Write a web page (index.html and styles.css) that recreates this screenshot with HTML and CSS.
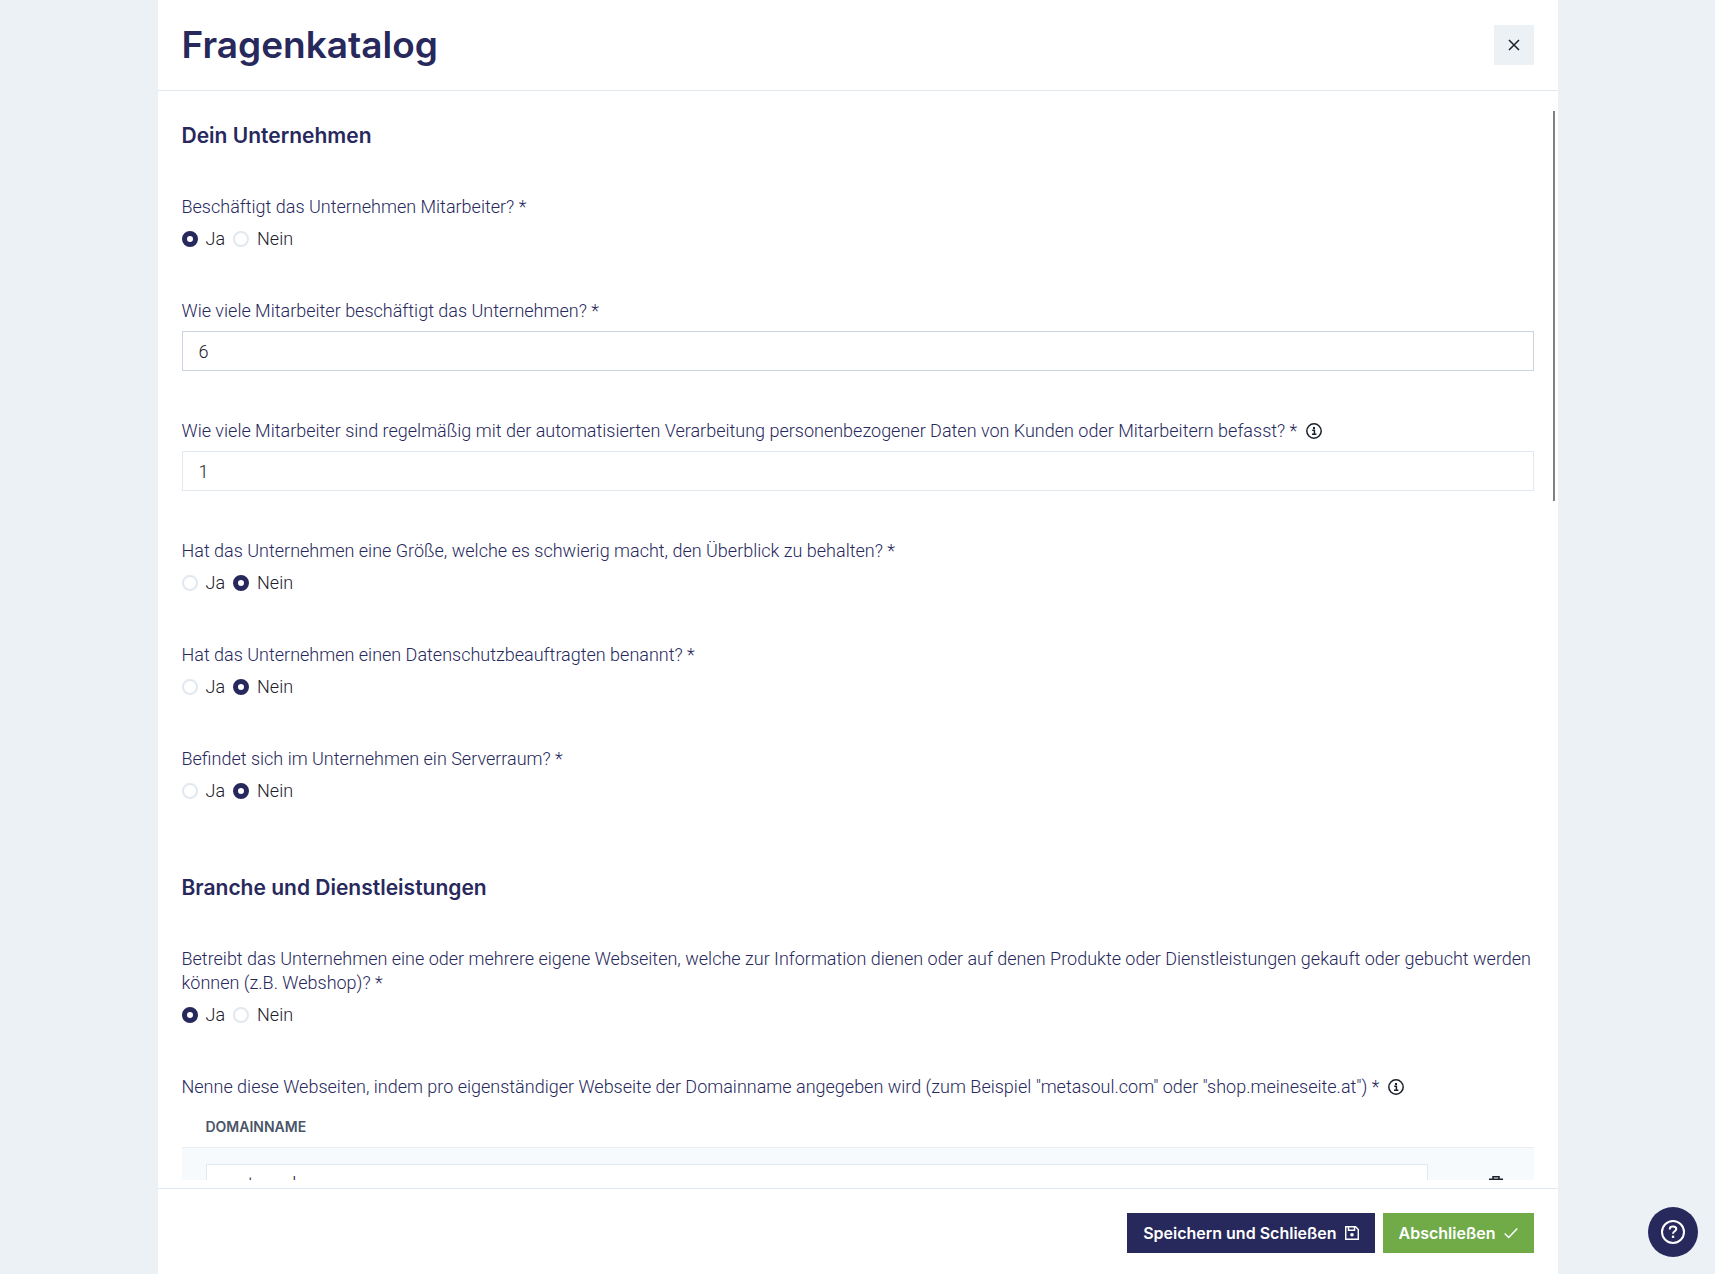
FILE: index.html
```html
<!DOCTYPE html>
<html lang="de">
<head>
	<title>Fragenkatalog</title>
	<meta charset="utf-8">
	<meta name="viewport" content="width=device-width, initial-scale=1">
	<link rel="stylesheet" href="styles.css">
</head>
<body>
	<main class="panel">
		<header class="panel-header">
			<h1>Fragenkatalog</h1>
			<button type="button" class="btn-close" aria-label="Schließen">
				<svg width="12" height="12" viewBox="0 0 12 12"><path d="M1 1l10 10M11 1L1 11"/></svg>
			</button>
		</header>

		<form class="panel-form" id="fragen">
			<section>
				<h2>Dein Unternehmen</h2>

				<fieldset class="question">
					<legend>Beschäftigt das Unternehmen Mitarbeiter? *</legend>
					<div class="options">
						<label><input type="radio" name="mitarbeiter" checked>Ja</label>
						<label><input type="radio" name="mitarbeiter">Nein</label>
					</div>
				</fieldset>

				<div class="question">
					<label class="question-label" for="anzahl">Wie viele Mitarbeiter beschäftigt das Unternehmen? *</label>
					<input class="text-input active" type="text" id="anzahl" value="6">
				</div>

				<div class="question">
					<label class="question-label" for="anzahl-daten">Wie viele Mitarbeiter sind regelmäßig mit der automatisierten Verarbeitung personenbezogener Daten von Kunden oder Mitarbeitern befasst? *
						<svg class="info" width="16" height="16" viewBox="0 0 16 16"><circle cx="8" cy="8" r="7.2"/><path d="M6.2 7.2H8.4V11M6 11.2h4.4"/><path class="dot" d="M7 4h2v2H7z"/></svg>
					</label>
					<input class="text-input" type="text" id="anzahl-daten" value="1">
				</div>

				<fieldset class="question">
					<legend>Hat das Unternehmen eine Größe, welche es schwierig macht, den Überblick zu behalten? *</legend>
					<div class="options">
						<label><input type="radio" name="groesse">Ja</label>
						<label><input type="radio" name="groesse" checked>Nein</label>
					</div>
				</fieldset>

				<fieldset class="question">
					<legend>Hat das Unternehmen einen Datenschutzbeauftragten benannt? *</legend>
					<div class="options">
						<label><input type="radio" name="dsb">Ja</label>
						<label><input type="radio" name="dsb" checked>Nein</label>
					</div>
				</fieldset>

				<fieldset class="question">
					<legend>Befindet sich im Unternehmen ein Serverraum? *</legend>
					<div class="options">
						<label><input type="radio" name="serverraum">Ja</label>
						<label><input type="radio" name="serverraum" checked>Nein</label>
					</div>
				</fieldset>
			</section>

			<section>
				<h2>Branche und Dienstleistungen</h2>

				<fieldset class="question">
					<legend>Betreibt das Unternehmen eine oder mehrere eigene Webseiten, welche zur Information dienen oder auf denen Produkte oder Dienstleistungen gekauft oder gebucht werden können (z.B. Webshop)? *</legend>
					<div class="options">
						<label><input type="radio" name="webseiten" checked>Ja</label>
						<label><input type="radio" name="webseiten">Nein</label>
					</div>
				</fieldset>

				<div class="question">
					<label class="question-label" for="domain">Nenne diese Webseiten, indem pro eigenständiger Webseite der Domainname angegeben wird (zum Beispiel "metasoul.com" oder "shop.meineseite.at") *
						<svg class="info" width="16" height="16" viewBox="0 0 16 16"><circle cx="8" cy="8" r="7.2"/><path d="M6.2 7.2H8.4V11M6 11.2h4.4"/><path class="dot" d="M7 4h2v2H7z"/></svg>
					</label>
					<table class="domains">
						<thead>
							<tr><th>Domainname</th><th class="action"></th></tr>
						</thead>
						<tbody>
							<tr>
								<td><input class="text-input" type="text" id="domain" value="metasoul.com"></td>
								<td class="action">
									<button type="button" class="btn-delete" aria-label="Löschen">
										<svg width="14" height="16" viewBox="0 0 14 16"><path d="M0 3.2h14M4 3V.8h6V3M2 4v11h10V4M5.5 6.5v6M8.5 6.5v6"/></svg>
									</button>
								</td>
							</tr>
						</tbody>
					</table>
				</div>
			</section>
		</form>
		<div class="scroll-thumb"></div>

		<footer class="panel-footer">
			<button type="submit" form="fragen" class="btn btn-primary">Speichern und Schließen
				<svg width="14" height="14" viewBox="0 0 14 14"><path d="M.7.7h9.8l2.8 2.8v9.8H.7z"/><path d="M3.5 1v3.3h6V1"/><circle class="dot" cx="7" cy="8.8" r="1.8"/></svg>
			</button>
			<button type="submit" form="fragen" class="btn btn-success">Abschließen
				<svg width="14" height="14" viewBox="0 0 14 14"><path d="M.7 7.5l4 4L13.3 2.5"/></svg>
			</button>
		</footer>
	</main>

	<button type="button" class="btn-help" aria-label="Hilfe">
		<svg width="24" height="24" viewBox="0 0 24 24"><circle cx="12" cy="12" r="11"/><path d="M8.8 9.6V9c0-1.6 1-2.4 3.2-2.4s3.3 1 3.3 2.5c0 2.3-3.3 2-3.3 4.7"/><path class="dot" d="M10.9 15.6h2.3v2.3h-2.3z"/></svg>
	</button>
</body>
</html>
```
FILE: styles.css
```css
* {
	box-sizing: border-box;
	margin: 0;
	padding: 0;
}

body {
	background: #ecf1f6;
	color: #1a202c;
	font-family: Roboto, "Liberation Sans", sans-serif;
	font-size: 18px;
	font-weight: 300;
	line-height: 24px;
}

button, input {
	font: inherit;
	color: inherit;
}

button {
	border: 0;
	cursor: pointer;
}

svg {
	fill: none;
	stroke: currentColor;
	stroke-width: 1.5;
}

svg .dot {
	fill: currentColor;
	stroke: none;
}

/* panel */
.panel {
	position: relative;
	display: flex;
	flex-direction: column;
	width: calc(100% - 48px);
	max-width: 1400px;
	height: 100vh;
	margin: 0 auto;
	background: #fff;
}

.panel-header {
	display: flex;
	align-items: center;
	justify-content: space-between;
	padding: 20px 24px;
	border-bottom: 1px solid #e2e8f0;
}

h1, h2, th, .btn {
	font-family: Inter, "Liberation Sans", sans-serif;
	font-weight: 600;
}

h1, h2 {
	color: #27285c;
}

h1 {
	font-size: 37px;
	line-height: 50px;
}

h2 {
	margin-bottom: 46px;
	font-size: 21px;
	line-height: 26px;
}

.btn-close {
	display: flex;
	align-items: center;
	justify-content: center;
	width: 40px;
	height: 40px;
	background: #ecf1f6;
}

.panel-form {
	flex: 1;
	min-height: 0;
	margin-bottom: 8px;
	padding: 32px 24px 0;
	overflow-y: auto;
	scrollbar-width: none;
}

.scroll-thumb {
	position: absolute;
	top: 111px;
	right: 3px;
	width: 2px;
	height: 390px;
	background: #808080;
}

section {
	margin-bottom: 72px;
}

/* questions */
.question {
	margin-bottom: 48px;
	border: 0;
}

.question:last-child {
	margin-bottom: 0;
}

.question-label, legend {
	display: block;
	margin-bottom: 8px;
	color: #27285c;
}

.info {
	margin-left: 4px;
	color: #1a202c;
	vertical-align: -2px;
}

.options {
	display: flex;
	gap: 8px;
}

.options label {
	display: flex;
	align-items: center;
	gap: 8px;
}

.options input {
	appearance: none;
	width: 16px;
	height: 16px;
	border: 2px solid #e2e8f0;
	border-radius: 50%;
	background: #fff;
}

.options input:checked {
	border: 5px solid #27285c;
}

.text-input {
	display: block;
	width: 100%;
	height: 40px;
	padding: 0 16px;
	border: 1px solid #e2e8f0;
	background: #fff;
}

.text-input.active {
	border-color: #cbd5e0;
}

/* domain table */
.domains {
	width: 100%;
	border-collapse: collapse;
}

.domains th {
	height: 40px;
	padding: 0 24px;
	color: #4a5568;
	font-size: 14px;
	text-align: left;
	text-transform: uppercase;
}

.domains td {
	padding: 16px 24px;
	border-top: 1px solid #e8eef2;
	background: #f6fafd;
}

.domains .action {
	width: 82px;
	padding: 0 18px 0 24px;
}

.btn-delete {
	display: flex;
	align-items: center;
	justify-content: center;
	width: 40px;
	height: 40px;
	background: none;
}

/* footer */
.panel-footer {
	display: flex;
	justify-content: flex-end;
	gap: 8px;
	padding: 24px 24px 21px;
	border-top: 1px solid #e2e8f0;
}

.btn {
	display: flex;
	align-items: center;
	gap: 8px;
	height: 40px;
	padding: 0 16px;
	color: #fff;
	font-size: 16px;
}

.btn-primary {
	background: #27285c;
}

.btn-success {
	background: #70ab48;
}

.btn-help {
	position: fixed;
	right: 17px;
	bottom: 17px;
	display: flex;
	align-items: center;
	justify-content: center;
	width: 50px;
	height: 50px;
	border-radius: 50%;
	background: #27285c;
	color: #fff;
}

.btn-help svg {
	stroke-width: 2;
}
```
